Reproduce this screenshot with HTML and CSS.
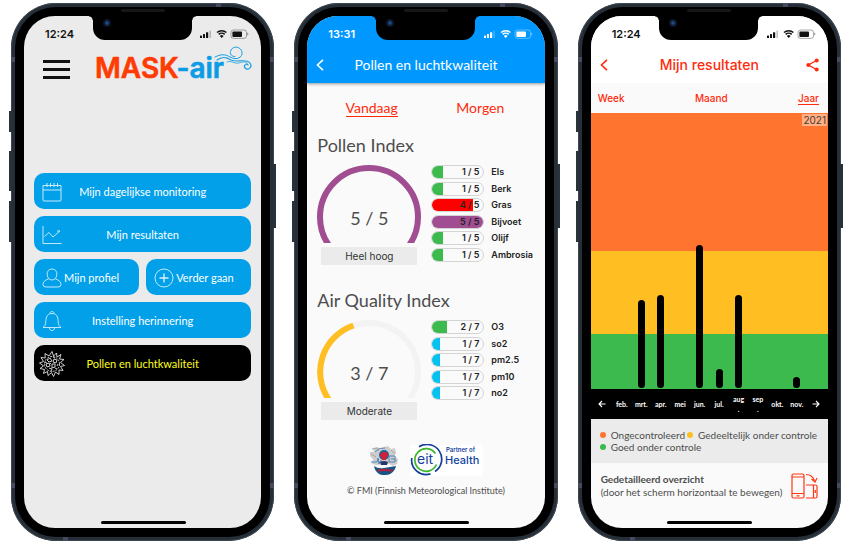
FILE: index.html
```html
<!DOCTYPE html>
<html lang="nl">
<head>
<meta charset="utf-8">
<meta name="viewport" content="width=device-width, initial-scale=1">
<title>MASK-air</title>
<link rel="stylesheet" href="styles.css">
</head>
<body>
<svg class="sprite" aria-hidden="true">
  <symbol id="status" viewBox="0 0 50 10">
    <g fill="currentColor">
      <rect x="1" y="6.500" width="2" height="2.500" rx=".5"/><rect x="4" y="5" width="2" height="4" rx=".5"/><rect x="7" y="3.200" width="2.200" height="5.800" rx=".5"/><rect x="10.400" y="1.400" width="1.600" height="7.600" rx=".5" opacity=".25"/>
      <path d="M22.700 9 20.800 6.900a2.800 2.800 0 0 1 3.800 0z"/>
      <rect x="33.400" y="2.400" width="9.600" height="5.600" rx="1"/>
      <path d="M48.300 3.600v3q1-.4 1-1.500t-1-1.500z" opacity=".5"/>
    </g>
    <g fill="none" stroke="currentColor">
      <path d="M19.700 5.400a4.400 4.400 0 0 1 6 0M18 3.500a7 7 0 0 1 9.400 0" stroke-width="1.500"/>
      <rect x="32" y="1" width="15.500" height="8.400" rx="2.400" stroke-width=".8" opacity=".45"/>
    </g>
  </symbol>
</svg>

<main class="showcase">

  <section class="phone" aria-label="Hoofdmenu">
    <i class="key key-mute"></i><i class="key key-up"></i><i class="key key-down"></i><i class="key key-power"></i>
    <i class="band band-tl"></i><i class="band band-tr"></i><i class="band band-bl"></i><i class="band band-br"></i><i class="band band-top"></i><i class="band band-bottom"></i>
    <div class="bezel">
      <div class="screen screen-menu">
        <div class="status"><span>12:24</span><svg class="status-icons"><use href="#status"/></svg></div>
        <header class="brandbar">
          <button class="burger" aria-label="Menu"><i></i><i></i><i></i></button>
          <svg class="logo" viewBox="0 0 156 34">
            <text class="logo-text" x="-1" y="32"><tspan class="logo-mask">MASK</tspan><tspan class="logo-air">-air</tspan></text>
            <g class="wind">
              <path d="M119 11C125 8 129 8 134 11C141 15 147 11 146 6C145 1 138-1 135 4C133 8 136 11 139 10.500"/>
              <path d="M121 14C126 10 130 11 135 14C141 17 150 12 154 17C157 21 152 25 149 22C147 19 151 17 152 19" stroke-width="1.200"/>
              <path d="M131 16C136 14 137 18 143 17C147 16 149 15 151 17" stroke-width=".8"/>
            </g>
          </svg>
        </header>
        <nav class="menu">
          <button class="tile"><svg class="tile-icon" viewBox="0 0 20 20"><path d="M1 3.500h18v14.500q0 1-1 1H2q-1 0-1-1zM1 8h18M5 1v4M8.500 1v4M12 1v4M15.500 1v4"/></svg><span>Mijn dagelijkse monitoring</span></button>
          <button class="tile"><svg class="tile-icon" viewBox="0 0 20 20"><path d="M1 1v17.500h18.500M2.500 11.500 7 7.500l4 4.500L18 6M15 6h3"/></svg><span>Mijn resultaten</span></button>
          <div class="pair">
            <button class="tile tile-half"><svg class="tile-icon" viewBox="0 0 20 20"><path d="M10 1C6.500 1 5 3.500 5.200 6.500S7 12 10 12s4.600-2.500 4.800-5.500S13.500 1 10 1zM6.500 11C3 12 1 14 1 16.500Q1 19 4 19H16q3 0 3-2.500C19 14 17 12 13.500 11"/></svg><span>Mijn profiel</span></button>
            <button class="tile tile-half"><svg class="tile-icon" viewBox="0 0 20 20"><circle cx="10" cy="10" r="9"/><path d="M10 5.500v9M5.500 10h9" stroke-width="1.400"/></svg><span>Verder gaan</span></button>
          </div>
          <button class="tile"><svg class="tile-icon" viewBox="0 0 20 20"><path d="M8 2.500C8-.2 12-.2 12 2.500M1 16.500H19C16 14 16.500 12 16 8.500 15.500 4.500 13.500 2.500 10 2.500S4.500 4.500 4 8.500C3.500 12 4 14 1 16.500zM7.500 17C8 20.500 12 20.500 12.500 17"/></svg><span>Instelling herinnering</span></button>
          <button class="tile tile-dark"><svg class="pollen" viewBox="-13 -13 26 26"><path d="M0-12.500 1.500-8 4.500-11 5-7 9-9.500 7.500-5 12-4.500 8.500-1.500 12.500 1.500 8.500 2.500 11 6.500 7 6 7 10.500 3.500 8 1.500 12.500-.5 8.500-4 11.500-4.500 7.500-8.500 9.500-7.500 5.500-12 4.500-8.500 1.800-12.500-1-8.500-2.500-11-6.500-6.800-6-7-10.500-3-8z"/><circle r="7.500" stroke-dasharray="2 1"/><path d="M-5-4-2-6 0-3-3-2zM2-5 5-4 4-1 1-2zM-6 0-3-1-2 2-5 3zM0 0 3 0 3 3 0 4zM-3 4 0 5-1 7M5 2 6 0M-7-2-5-1M1-7 3-6M3 4 5 5M-1-1-2 0"/></svg><span>Pollen en luchtkwaliteit</span></button>
        </nav>
        <i class="home"></i>
      </div>
      <i class="notch"></i><i class="speaker"></i><i class="camera"></i>
    </div>
  </section>

  <section class="phone" aria-label="Pollen en luchtkwaliteit">
    <i class="key key-mute"></i><i class="key key-up"></i><i class="key key-down"></i><i class="key key-power"></i>
    <i class="band band-tl"></i><i class="band band-tr"></i><i class="band band-bl"></i><i class="band band-br"></i><i class="band band-top"></i><i class="band band-bottom"></i>
    <div class="bezel">
      <div class="screen">
        <div class="masthead masthead-blue">
          <div class="status"><span>13:31</span><svg class="status-icons"><use href="#status"/></svg></div>
          <header class="titlebar">
            <button class="back" aria-label="Terug"><svg viewBox="0 0 8 12"><path d="M7 .8 1.500 6 7 11.200"/></svg></button>
            <h1>Pollen en luchtkwaliteit</h1>
          </header>
        </div>
        <div class="air">
          <nav class="days"><button class="active">Vandaag</button><button>Morgen</button></nav>

          <h2>Pollen Index</h2>
          <div class="index">
            <div class="gauge">
              <svg viewBox="0 0 104 78"><circle class="arc arc-purple" cx="52" cy="52" r="49"/></svg>
              <strong>5 / 5</strong>
              <span class="verdict">Heel hoog</span>
            </div>
            <ul class="levels">
              <li><span class="pill"><i class="green" style="width:20%"></i><b>1 / 5</b></span>Els</li>
              <li><span class="pill"><i class="green" style="width:20%"></i><b>1 / 5</b></span>Berk</li>
              <li><span class="pill"><i class="red" style="width:80%"></i><b>4 / 5</b></span>Gras</li>
              <li><span class="pill"><i class="purple" style="width:100%"></i><b>5 / 5</b></span>Bijvoet</li>
              <li><span class="pill"><i class="green" style="width:20%"></i><b>1 / 5</b></span>Olijf</li>
              <li><span class="pill"><i class="green" style="width:20%"></i><b>1 / 5</b></span>Ambrosia</li>
            </ul>
          </div>

          <h2>Air Quality Index</h2>
          <div class="index">
            <div class="gauge">
              <svg viewBox="0 0 104 78"><circle class="arc arc-track" cx="52" cy="52" r="49"/><path class="arc arc-yellow" d="M8 82L10.700 78A49 49 0 0 1 36.500 5.500"/></svg>
              <strong>3 / 7</strong>
              <span class="verdict">Moderate</span>
            </div>
            <ul class="levels levels-short">
              <li><span class="pill"><i class="green" style="width:28.6%"></i><b>2 / 7</b></span>O3</li>
              <li><span class="pill"><i class="cyan" style="width:14.3%"></i><b>1 / 7</b></span>so2</li>
              <li><span class="pill"><i class="cyan" style="width:14.3%"></i><b>1 / 7</b></span>pm2.5</li>
              <li><span class="pill"><i class="cyan" style="width:14.3%"></i><b>1 / 7</b></span>pm10</li>
              <li><span class="pill"><i class="cyan" style="width:14.3%"></i><b>1 / 7</b></span>no2</li>
            </ul>
          </div>

          <div class="partners">
            <svg class="gear" viewBox="0 0 30 32">
              <path d="M4 4 9 3 11 5 15 3 19 2 22 5 26 4 27 9 25 12 29 15 28 20 24 22 20 20 8 21 3 20 4 15 1 12 1 8 5 8z" fill="#cfcdcd"/>
              <path d="M3 5 8 4 10 7M2 10 7 13M22 6 26 10M24 15 28 17" stroke="#aaa8a8" fill="none"/>
              <path d="M5 22q4 3 10 2t12-2q-1 5-5 7.500t-11 1Q6 28 5 22z" fill="#1a5482"/>
              <path d="M8 26q6-2 16 0l-1 1.500q-7-1-14 0z" fill="#b61e3c"/>
              <circle cx="15" cy="11" r="5" fill="#17649a"/><path d="M15 8q5 0 4 4-2 1-2 4h-4q0-3-2-4 0-4 4-4z" fill="#d1203c"/>
              <path d="M6 8q4-5 10-4M2 18h6l1-4 1 6 1-3h2M20 12h6v6h-6zM22 15h3" fill="none" stroke="#3f7fb5" stroke-width=".9"/>
              <path d="M11 18q4-2 8 0l-1 3h-6z" fill="#28376a"/>
            </svg>
            <svg class="eit" viewBox="0 0 73 32">
              <rect y="1" width="73" height="31" fill="#fff"/>
              <g fill="none" stroke-width="1.700">
                <path d="M9 2.800A14.500 14.500 0 0 1 25 27.500" stroke="#123f9e"/><path d="M20.500 29.900A14.500 14.500 0 0 1 1.800 14" stroke="#123f9e"/>
                <path d="M25.400 9.500A11.300 11.300 0 1 0 26.500 20.500" stroke="#3cb62b"/>
              </g>
              <text class="eit-core" x="7" y="20">eit</text>
              <text class="eit-partner" x="36" y="8">Partner of</text>
              <text class="eit-health" x="35" y="20">Health</text>
            </svg>
          </div>
          <p class="credit">© FMI (Finnish Meteorological Institute)</p>
        </div>
        <i class="home"></i>
      </div>
      <i class="notch"></i><i class="speaker"></i><i class="camera"></i>
    </div>
  </section>

  <section class="phone" aria-label="Mijn resultaten">
    <i class="key key-mute"></i><i class="key key-up"></i><i class="key key-down"></i><i class="key key-power"></i>
    <i class="band band-tl"></i><i class="band band-tr"></i><i class="band band-bl"></i><i class="band band-br"></i><i class="band band-top"></i><i class="band band-bottom"></i>
    <div class="bezel">
      <div class="screen">
        <div class="masthead masthead-white">
          <div class="status"><span>12:24</span><svg class="status-icons"><use href="#status"/></svg></div>
          <header class="titlebar">
            <button class="back" aria-label="Terug"><svg viewBox="0 0 8 12"><path d="M7 .8 1.500 6 7 11.200"/></svg></button>
            <h1>Mijn resultaten</h1>
            <button class="share" aria-label="Delen"><svg viewBox="0 0 13 14"><path d="M10.500 2.500 2.500 7l8 4.500" fill="none" stroke="currentColor" stroke-width="1.400"/><g fill="currentColor"><circle cx="10.700" cy="2.400" r="2"/><circle cx="2.300" cy="7" r="2"/><circle cx="10.700" cy="11.600" r="2"/></g></svg></button>
          </header>
        </div>
        <nav class="range"><button>Week</button><button>Maand</button><button class="active">Jaar</button></nav>
        <div class="plot">
          <span class="year">2021</span>
          <div class="columns">
            <i></i><i></i>
            <i style="height:32%"></i><i style="height:34%"></i>
            <i></i>
            <i style="height:52%"></i><i style="height:7%"></i><i style="height:34%"></i>
            <i></i><i></i>
            <i style="height:4%"></i>
            <i></i>
          </div>
        </div>
        <div class="months">
          <button aria-label="Vorige"><svg viewBox="0 0 8 8"><path d="M7.500 4H1M4 1 1 4l3 3"/></svg></button>
          <span>feb.</span><span>mrt.</span><span>apr.</span><span>mei</span><span>jun.</span><span>jul.</span><span>aug<br>.</span><span>sep<br>.</span><span>okt.</span><span>nov.</span>
          <button aria-label="Volgende"><svg viewBox="0 0 8 8"><path d="M.5 4H7M4 1l3 3-3 3"/></svg></button>
        </div>
        <ul class="legend">
          <li><i class="orange"></i>Ongecontroleerd</li>
          <li><i class="yellow"></i>Gedeeltelijk onder controle</li>
          <li><i class="green"></i>Goed onder controle</li>
        </ul>
        <div class="detail">
          <p><b>Gedetailleerd overzicht</b><span>(door het scherm horizontaal te bewegen)</span></p>
          <svg class="rotate" viewBox="0 0 27 26"><rect x="1" y="1" width="12" height="24" rx="1.500"/><path d="M1 4h12M1 20.500h12M5.500 22.800h3M15 12h9.500q1.500 0 1.500 1.500v10q0 1.500-1.500 1.500H15M22.500 12v13M24.300 17v3M15 1.500q6 0 8.500 6M20.500 6l3.500 3 2-4"/></svg>
        </div>
        <i class="home"></i>
      </div>
      <i class="notch"></i><i class="speaker"></i><i class="camera"></i>
    </div>
  </section>

</main>
</body>
</html>
```
FILE: styles.css
```css
* { box-sizing: border-box; }
body { margin: 0; background: #fff; font-family: Lato, sans-serif; color: #4d4d4d; }
button { margin: 0; padding: 0; border: 0; background: none; color: inherit; font: inherit; cursor: pointer; }
ul, p, h1, h2 { margin: 0; padding: 0; list-style: none; font-weight: 400; }
svg { display: block; }
.sprite { position: absolute; width: 0; height: 0; }

.showcase {
  display: grid;
  grid-template-columns: repeat(3, minmax(0, 1fr));
  gap: 20px;
  min-height: 100vh;
  padding: 3px 9px 3px 11px;
}

/* Phone hardware */
.phone {
  position: relative;
  display: flex;
  padding: 4px;
  border-radius: 45px;
  background: #262f38;
  box-shadow: inset 0 0 0 1px #3d474f;
}
.bezel {
  position: relative;
  display: flex;
  flex: 1;
  min-width: 0;
  padding: 9px;
  border-radius: 41px;
  background: #000;
}
.key { position: absolute; width: 3px; background: #28323a; }
.key-mute { left: -2px; top: 108px; height: 21px; }
.key-up { left: -2px; top: 148px; height: 40px; }
.key-down { left: -2px; top: 198px; height: 41px; }
.key-power { right: -2px; top: 161px; height: 64px; }
.band { position: absolute; width: 4px; height: 5px; background: #484b60; }
.band-tl { left: 0; top: 54px; }
.band-tr { right: 0; top: 54px; }
.band-bl { left: 0; bottom: 53px; }
.band-br { right: 0; bottom: 53px; }
.band-top { right: 53px; top: 0; width: 5px; height: 4px; }
.band-bottom { left: 52px; bottom: 0; width: 5px; height: 4px; }
.notch {
  position: absolute;
  top: 8px;
  left: 50%;
  width: 99px;
  height: 25px;
  margin-left: -50px;
  border-radius: 0 0 12px 12px;
  background: #000;
}
.notch::before, .notch::after { content: ""; position: absolute; top: 1px; width: 4px; height: 4px; }
.notch::before { right: 100%; background: radial-gradient(circle at 0 100%, transparent 3px, #000 4px); }
.notch::after { left: 100%; background: radial-gradient(circle at 100% 100%, transparent 3px, #000 4px); }
.speaker { position: absolute; top: 2px; left: 50%; width: 44px; height: 3px; margin-left: -22px; border-radius: 2px; background: #161616; }
.camera {
  position: absolute;
  top: 12px;
  left: 50%;
  width: 8px;
  height: 8px;
  margin-left: -40px;
  border-radius: 50%;
  background: radial-gradient(circle, #1c4a86 0 20%, #0c1526 50%);
}
.home { position: absolute; bottom: 4px; left: 50%; width: 85px; height: 3px; margin-left: -42px; border-radius: 2px; background: #000; }

.screen {
  position: relative;
  display: flex;
  flex: 1;
  flex-direction: column;
  min-width: 0;
  overflow: hidden;
  border-radius: 31px;
  background: #fafafa;
}
.screen-menu { background: #ebebeb; }
.status {
  display: flex;
  align-items: center;
  justify-content: space-between;
  height: 30px;
  padding: 6px 12px 0 21px;
  color: #111;
  font: 600 11px/14px Inter, sans-serif;
}
.status-icons { width: 50px; height: 10px; }

/* Menu screen */
.brandbar { display: flex; align-items: flex-end; justify-content: space-between; padding: 0 9px 0 19px; }
.burger { display: grid; gap: 5px; width: 27px; padding-bottom: 1px; }
.burger i { height: 3px; background: #111; }
.logo { width: 156px; height: 34px; overflow: visible; }
.logo-text { font: 600 28px Inter, sans-serif; stroke-width: .6; stroke-linejoin: round; }
.logo-mask { fill: #ff3b05; stroke: #ff3b05; }
.logo-air { fill: #0b9ce6; stroke: #0b9ce6; }
.wind { fill: none; stroke: #1a9fe0; stroke-width: 1; stroke-linecap: round; }

.menu { display: grid; gap: 7px; margin-top: 93px; padding: 0 10px; }
.pair { display: grid; grid-template-columns: 1fr 1fr; gap: 7px; }
.tile {
  position: relative;
  display: flex;
  align-items: center;
  justify-content: center;
  height: 36px;
  padding-top: 1px;
  border-radius: 10px;
  background: #02a0e9;
  color: #fff;
  font-size: 11px;
  line-height: 16px;
}
.tile-icon { position: absolute; left: 8px; width: 20px; height: 20px; fill: none; stroke: #d6f0fc; stroke-width: .9; }
.tile-half { justify-content: flex-start; padding-left: 30px; }
.tile-dark { background: #000; color: #ffff1a; }
.pollen { position: absolute; left: 5px; width: 26px; height: 26px; fill: none; stroke: #e4e4e4; stroke-width: .9; }

/* Shared title bar */
.masthead-blue { position: relative; background: #0098ff; color: #fff; box-shadow: 0 1px 3px rgba(0, 0, 0, .4); }
.masthead-blue .status { color: #fff; }
.masthead-white { background: #fff; color: #ff2b0c; }
.titlebar { position: relative; display: flex; align-items: center; justify-content: center; height: 37px; }
.titlebar h1 { font-size: 14px; line-height: 20px; }
.masthead-white h1 { font: 500 14px/20px Inter, sans-serif; }
.back { position: absolute; left: 9px; }
.back svg { width: 8px; height: 12px; fill: none; stroke: currentColor; stroke-width: 1.600; }
.share { position: absolute; right: 9px; }
.share svg { width: 13px; height: 14px; }

/* Air quality screen */
.air { padding: 16px 10px 0; }
.days { display: grid; grid-template-columns: 1fr 1fr; justify-items: center; color: #ff2b0c; font-size: 14px; line-height: 17px; }
.days button { border-bottom: 1px solid transparent; }
.days .active { border-color: currentColor; }
.air h2 { margin: 16px 0 8px; font-size: 18px; line-height: 24px; }
.index + h2 { margin-top: 23px; }
.index { display: flex; gap: 10px; }
.gauge { position: relative; display: grid; gap: 4px; justify-items: center; width: 104px; }
.gauge svg { width: 104px; height: 78px; }
.gauge strong { position: absolute; top: 41px; font-size: 18px; line-height: 24px; font-weight: 400; }
.arc { fill: none; stroke-width: 6; }
.arc-purple { stroke: #a04d92; }
.arc-track { stroke: #f3f3f3; }
.arc-yellow { stroke: #ffbe21; }
.verdict { width: 96px; background: #ebebeb; color: #333; font: 10px/18px Inter, sans-serif; text-align: center; }
.levels { display: flex; flex-direction: column; justify-content: space-between; height: 97px; color: #222; font: 600 9px/14px Inter, sans-serif; }
.levels-short { height: 80px; }
.levels li { display: flex; gap: 7px; }
.pill { position: relative; width: 53px; height: 14px; overflow: hidden; border: 1px solid #d4d4d4; border-radius: 7px; }
.pill i { position: absolute; top: 0; bottom: 0; left: 0; }
.pill b { position: relative; display: block; padding-right: 4px; font-weight: 600; line-height: 12px; text-align: right; }
.green { background: #3cba4e; }
.red { background: #f00; }
.purple { background: #a04d92; }
.cyan { background: #04c1ef; }
.orange { background: #ff7530; }
.yellow { background: #ffbe21; }
.partners { display: flex; gap: 11px; justify-content: center; margin-top: 24px; }
.gear { width: 30px; height: 32px; }
.eit { width: 73px; height: 32px; fill: #123f9e; }
.eit-core { font: 14px Inter, sans-serif; }
.eit-partner { font: 600 6px Inter, sans-serif; }
.eit-health { font: 500 11px Inter, sans-serif; }
.credit { margin-top: 7px; font-size: 9px; line-height: 16px; text-align: center; }

/* Results screen */
.range { display: flex; justify-content: space-between; align-items: center; height: 30px; padding: 0 9px 0 7px; color: #ff2b0c; font: 500 10px/12px Inter, sans-serif; }
.range button { border-bottom: 1px solid transparent; }
.range .active { border-color: currentColor; }
.plot {
  position: relative;
  display: flex;
  flex: 1;
  padding: 0 2px 1px;
  background: linear-gradient(#ff7530 50%, #ffbe21 50% 80%, #3cba4e 80%);
}
.year { position: absolute; top: 1px; right: 1px; padding: 0 1px; background: rgba(255, 235, 220, .5); color: #4a3a30; font: 10px/12px Inter, sans-serif; }
.columns, .months { display: grid; grid-template-columns: repeat(12, minmax(0, 1fr)); justify-items: center; }
.columns { flex: 1; align-items: end; }
.columns i { width: 7px; border-radius: 4px; background: #000; }
.months { align-items: center; height: 30px; padding: 0 2px; background: #000; color: #fff; font: 700 7px/10px Lato, sans-serif; text-align: center; }
.months svg { width: 8px; height: 8px; fill: none; stroke: #fff; stroke-width: 1.100; }
.legend { display: flex; flex-wrap: wrap; column-gap: 2px; padding: 10px 5px 10px 9px; background: #ebebeb; font-size: 10px; line-height: 12px; }
.legend li { display: flex; align-items: center; gap: 5px; }
.legend i { width: 6px; height: 6px; border-radius: 50%; }
.detail { display: flex; justify-content: space-between; padding: 10px 10px 29px; font-size: 10px; line-height: 13px; }
.detail b, .detail span { display: block; white-space: nowrap; }
.rotate { width: 27px; height: 26px; fill: none; stroke: #ff3514; stroke-width: 1.200; }
```
